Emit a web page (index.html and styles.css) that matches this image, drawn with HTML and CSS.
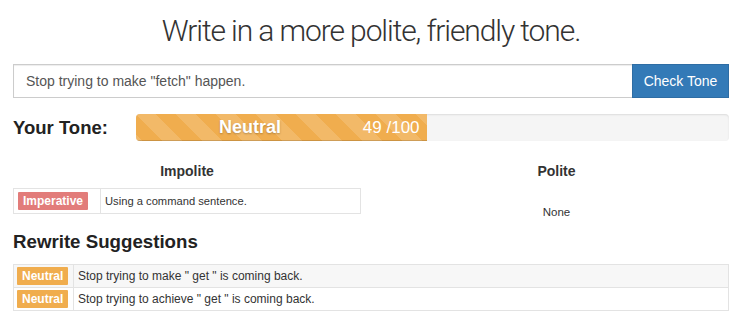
FILE: index.html
```html
<!DOCTYPE html>
<html>
<head>
<meta charset="utf-8">
<link rel="stylesheet" href="styles.css">
</head>
<body>
<div class="page">
  <h1 class="title">Write in a more polite, friendly tone.</h1>
  <div class="input-group">
    <div class="input">Stop trying to make "fetch" happen.</div>
    <button class="btn">Check Tone</button>
  </div>
  <div class="tone-row">
    <div class="tone-label">Your Tone:</div>
    <div class="progress">
      <div class="progress-bar" style="width:49%">
        <span class="bar-name">Neutral</span>
        <span class="bar-score">49 /100</span>
      </div>
    </div>
  </div>
  <div class="cols">
    <div class="col">
      <div class="col-head">Impolite</div>
      <table class="tbl">
        <tr><td class="lbl-cell"><span class="label label-danger">Imperative</span></td><td class="reason">Using a command sentence.</td></tr>
      </table>
    </div>
    <div class="col">
      <div class="col-head">Polite</div>
      <div class="none">None</div>
    </div>
  </div>
  <h2 class="sub">Rewrite Suggestions</h2>
  <table class="tbl full striped">
    <tr><td class="lbl-cell small"><span class="label label-warning">Neutral</span></td><td>Stop trying to make " get " is coming back.</td></tr>
    <tr><td class="lbl-cell small"><span class="label label-warning">Neutral</span></td><td>Stop trying to achieve " get " is coming back.</td></tr>
  </table>
</div>
</body>
</html>
```

FILE: styles.css
```css
* { box-sizing: border-box; }
body {
  margin: 0;
  font-family: "Liberation Sans", Arial, sans-serif;
  color: #333;
  font-size: 12px;
  background: #fff;
}
.page {
  width: 729px;
  padding-left: 13px;
}
.title {
  margin: 0;
  padding-top: 13px;
  height: 64px;
  text-align: center;
  font-family: Roboto, "Liberation Sans", sans-serif;
  font-weight: 300;
  font-size: 30px;
  line-height: 36px;
  color: #333;
  letter-spacing: -1.1px;
}
.input-group {
  display: flex;
  height: 34px;
}
.input {
  flex: 1;
  border: 1px solid #ccc;
  border-right: none;
  box-shadow: inset 0 1px 1px rgba(0,0,0,.075);
  padding: 0 12px;
  display: flex;
  align-items: center;
  font-size: 14px;
  color: #555;
}
.btn {
  width: 97px;
  border: 1px solid #2e6da4;
  background: #337ab7;
  color: #fff;
  font-family: "Liberation Sans", Arial, sans-serif;
  font-size: 14px;
  padding: 0;
  margin: 0;
}
.tone-row {
  display: flex;
  align-items: center;
  margin-top: 16px;
  height: 27px;
}
.tone-label {
  width: 123px;
  font-size: 18.5px;
  font-weight: bold;
  color: #222;
}
.progress {
  flex: 1;
  height: 27px;
  background: #f5f5f5;
  border-radius: 4px;
  box-shadow: inset 0 1px 2px rgba(0,0,0,.1);
  overflow: hidden;
}
.progress-bar {
  height: 100%;
  background-color: #f0ad4e;
  background-image: linear-gradient(45deg, rgba(255,255,255,.15) 25%, transparent 25%, transparent 50%, rgba(255,255,255,.15) 50%, rgba(255,255,255,.15) 75%, transparent 75%, transparent);
  background-size: 40px 40px;
  box-shadow: inset 0 -1px 0 rgba(0,0,0,.15);
  display: flex;
  align-items: center;
  justify-content: space-between;
  padding: 0 7px 0 83px;
  color: #fff;
}
.bar-name {
  font-size: 18px;
  font-weight: bold;
  text-shadow: 0 1px 2px rgba(0,0,0,.25);
}
.bar-score {
  font-size: 17px;
}
.cols {
  display: flex;
  margin-top: 22px;
}
.col {
  width: 348px;
}
.col + .col {
  margin-left: 23px;
}
.col-head {
  text-align: center;
  font-weight: bold;
  font-size: 14px;
  height: 16px;
  line-height: 16px;
  margin-bottom: 9px;
}
.none {
  text-align: center;
  font-size: 11.5px;
  margin-top: 27px;
}
.tbl {
  border-collapse: collapse;
  width: 348px;
}
.tbl.full {
  width: 716px;
}
.tbl td {
  border: 1px solid #e3e3e3;
  height: 25px;
  padding: 0 4px;
  font-size: 12px;
  vertical-align: middle;
}
.tbl td.reason { font-size: 11.2px; }
.tbl.striped td { height: 23px; }
.tbl.striped tr:first-child { background: #f7f7f7; }
.lbl-cell { width: 87px; }
.lbl-cell.small { width: 60px; padding: 0 3px; }
.label {
  display: inline-block;
  color: #fff;
  font-weight: bold;
  font-size: 12px;
  line-height: 18px;
  padding: 0 5px;
  border-radius: 1px;
}
.label-danger { background: #e27c7a; }
.label-warning { background: #f0ad4e; }
.sub {
  margin: 12px 0 0;
  height: 34px;
  font-size: 18.7px;
  line-height: 24px;
  font-weight: bold;
  color: #222;
}
```
